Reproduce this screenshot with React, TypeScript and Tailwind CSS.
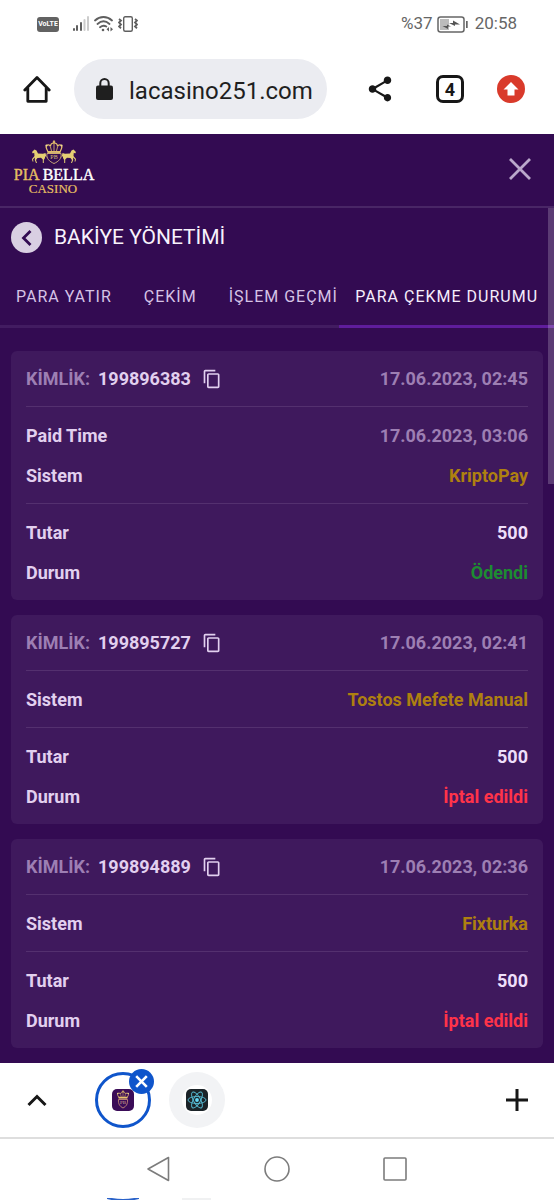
import { MdContentCopy, MdShare } from "react-icons/md";

type Transaction = {
  id: string;
  date: string;
  paidTime?: string;
  system: string;
  amount: string;
  status: "paid" | "cancelled";
};

const transactions: Transaction[] = [
  {
    id: "199896383",
    date: "17.06.2023, 02:45",
    paidTime: "17.06.2023, 03:06",
    system: "KriptoPay",
    amount: "500",
    status: "paid",
  },
  {
    id: "199895727",
    date: "17.06.2023, 02:41",
    system: "Tostos Mefete Manual",
    amount: "500",
    status: "cancelled",
  },
  {
    id: "199894889",
    date: "17.06.2023, 02:36",
    system: "Fixturka",
    amount: "500",
    status: "cancelled",
  },
];

const statuses = {
  paid: { label: "Ödendi", color: "text-[#1d8c31]" },
  cancelled: { label: "İptal edildi", color: "text-[#ff3349]" },
};

function StatusBar() {
  return (
    <div className="flex h-[46px] items-center justify-between pt-[2px] pl-[37px] pr-[37px] text-[17px] text-[#666]">
      <div className="flex items-center">
        <span className="flex h-[15px] w-[22px] items-center justify-center rounded-[3px] bg-[#626262] text-[7px] font-bold text-white">
          VoLTE
        </span>
        <svg className="ml-[13px]" width="18" height="16" viewBox="0 0 18 16" fill="#5f5f5f">
          <rect x="1" y="12" width="2" height="3" rx="1" />
          <rect x="4" y="9" width="2" height="6" rx="1" />
          <rect x="8" y="6" width="2" height="9" rx="1" />
          <rect x="11.500" y="3" width="2" height="12" rx="1" fill="#ccc" />
          <rect x="15" y="0" width="2" height="15" rx="1" fill="#ccc" />
        </svg>
        <svg className="ml-[4px]" width="20" height="16" viewBox="0 0 20 16" fill="none" stroke="#5f5f5f" strokeWidth="1.8" strokeLinecap="round">
          <path d="M1 4.500C6-.2 13-.2 18 4.500M3.500 8C7.200 4.600 11.800 4.600 15.500 8M6 11.300C8.300 9.400 10.500 9.400 12.300 10.500" />
          <circle cx="9" cy="14" r="1.300" fill="#5f5f5f" stroke="none" />
          <path d="M15 11l-2.500 2.300 2.500 2.300zM16.500 11l2.500 2.300-2.500 2.300z" fill="#5f5f5f" stroke="none" />
        </svg>
        <svg className="ml-[4px]" width="20" height="16" viewBox="0 0 20 16" fill="none" stroke="#5f5f5f" strokeWidth="1.400">
          <rect x="5.700" y=".7" width="8.600" height="14.600" rx="1.500" />
          <path d="M1 3l2 1.500-2 2 2 2-2 2 2 1.700M17 3l2 1.500-2 2 2 2-2 2 2 1.700" strokeWidth="1.800" />
        </svg>
      </div>
      <div className="flex items-center">
        <span>%37</span>
        <svg className="mr-[5px] ml-[4px]" width="33" height="17" viewBox="0 0 33 17">
          <rect x="1" y="1" width="26" height="15" rx="2.500" fill="none" stroke="#666" strokeWidth="1.500" />
          <rect x="3" y="3" width="9" height="11" fill="#bbb" />
          <rect x="29" y="5" width="1.700" height="7" fill="#666" />
          <path d="M12 7h4V4.500L23 8.500h-5V10zM14 10.500h-3V13L5.500 10H10V8.500z" fill="#555" />
        </svg>
        <span>20:58</span>
      </div>
    </div>
  );
}

function AddressBar() {
  return (
    <div className="flex h-[88px] items-center pr-[29px] pb-[2px] pl-[23px]">
      <button type="button" aria-label="Home">
        <svg width="28" height="28" viewBox="0 0 28 28" fill="none" stroke="#171717" strokeWidth="2.800" strokeLinejoin="round" strokeLinecap="round">
          <path d="M1.800 15L14 2.500 26.200 15M4.800 13v13.300h18.400V13" />
        </svg>
      </button>
      <div className="ml-[23px] flex h-[60px] min-w-0 flex-1 items-center gap-[16px] rounded-full bg-[#ebecf1] pl-[22px]">
        <svg className="shrink-0" width="17" height="22" viewBox="0 0 17 22">
          <rect y="7.500" width="17" height="14.500" rx="2" fill="#1f1f1f" />
          <path d="M4.300 8.500V5.300a4.200 4.200 0 0 1 8.400 0v3.200" fill="none" stroke="#1f1f1f" strokeWidth="2" />
        </svg>
        <input
          aria-label="Address"
          readOnly
          value="lacasino251.com"
          className="w-full min-w-0 bg-transparent pt-[3px] text-[24px] text-[#1f1f1f] outline-none"
        />
      </div>
      <button type="button" aria-label="Share" className="ml-[38px]">
        <MdShare size={30} color="#171717" />
      </button>
      <button
        type="button"
        aria-label="Open tabs"
        className="ml-[41px] flex h-[28px] w-[28px] items-center justify-center rounded-[7px] border-[3px] border-[#171717] text-[18px] font-bold text-[#171717]"
      >
        4
      </button>
      <button
        type="button"
        aria-label="Update"
        className="ml-[33px] flex h-[28px] w-[28px] items-center justify-center rounded-full bg-[#d93a2b]"
      >
        <svg width="16" height="16" viewBox="0 0 16 16" fill="#fff">
          <path d="M8 1l7.500 7.500H11.500V14.500h-7V8.500H.5z" />
        </svg>
      </button>
    </div>
  );
}

function Crown() {
  return (
    <g>
      <path d="M-7.500-4.500C-9-8-5-9.500-3.500-6.500C-3.500-9.500-1.500-10 0-10C1.500-10 3.500-9.500 3.500-6.500C5-9.500 9-8 7.500-4.500L6-1H-6z" fill="none" stroke="#e9c46c" strokeWidth="1.200" />
      <path d="M-6-1.500H6V.5H-6zM0-12.500l1 1.500-1 1.500-1-1.500zM0-9v7M-3.500-6l1 4M3.500-6l-1 4" fill="#e9c46c" stroke="#e9c46c" strokeWidth=".8" />
      <circle cx="-7.500" cy="-7.500" r="1.100" fill="#f2dc98" />
      <circle cx="7.500" cy="-7.500" r="1.100" fill="#f2dc98" />
    </g>
  );
}

function Horse() {
  return (
    <path
      d="M0 3L2.500 0.500L4.500 1.500L6 4.500L11 4.800L13.500 4L14.500 8.500L13 7L13 9L11.800 11V14H10.800V10.500L9 8.800L5.500 9L4 11L5 14H4L2.800 11L3 8.500L1 10.500L1.500 12.500H.5L0 10L2.500 7L2.200 3.800L.8 4.500z"
      fill="#e5cf73"
    />
  );
}

function Logo() {
  return (
    <svg width="86" height="60" viewBox="0 0 86 60" role="img" aria-label="Pia Bella Casino">
      <g transform="translate(43 14)">
        <Crown />
      </g>
      <path d="M36 14.500Q43 12.500 50 14.500C51 19.500 47.500 22.500 43 24.500C38.500 22.500 35 19.500 36 14.500z" fill="none" stroke="#c9a77a" strokeWidth="1" />
      <g transform="translate(21 10)">
        <Horse />
      </g>
      <g transform="translate(65 10) scale(-1 1)">
        <Horse />
      </g>
      <g fontFamily="Liberation Serif, serif" textAnchor="middle">
        <text x="43" y="20" fontSize="6" fill="#d8b878">PB</text>
        <text x="43" y="41" fontSize="16" fill="#e6bf62" stroke="#e6bf62" strokeWidth=".4">
          PIA <tspan fill="#fff" stroke="#fff">BELLA</tspan>
        </text>
        <text x="42" y="54" fontSize="13" fill="#e6bf62" stroke="#e6bf62" strokeWidth=".2">CASINO</text>
      </g>
    </svg>
  );
}

function SiteHeader() {
  return (
    <header className="flex h-[74px] items-center justify-between border-b-2 border-[#492666] pr-[23px] pb-[2px] pl-[11px]">
      <Logo />
      <button type="button" aria-label="Close">
        <svg width="22" height="22" viewBox="0 0 22 22" stroke="#baa8cb" strokeWidth="2.800">
          <path d="M1 1l20 20M21 1L1 21" />
        </svg>
      </button>
    </header>
  );
}

function Tabs() {
  return (
    <nav className="mt-[15px] flex whitespace-nowrap text-[16px] tracking-[1px] text-[#d6c3e6]">
      <button type="button" className="h-[60px] shrink-0 border-b-3 border-[#421c61] px-4">
        PARA YATIR
      </button>
      <button type="button" className="h-[60px] shrink-0 border-b-3 border-[#421c61] px-4">
        ÇEKİM
      </button>
      <button type="button" className="h-[60px] min-w-0 flex-1 overflow-hidden border-b-3 border-[#421c61] pl-4 text-left">
        İŞLEM GEÇMİ
      </button>
      <button type="button" className="h-[60px] shrink-0 border-b-3 border-[#5f1d9c] px-4 text-[#f6eefc]">
        PARA ÇEKME DURUMU
      </button>
    </nav>
  );
}

function Row({ label, value, color }: { label: string; value: string; color: string }) {
  return (
    <div className="flex h-[40px] items-center justify-between">
      <dt>{label}</dt>
      <dd className={color}>{value}</dd>
    </div>
  );
}

function TransactionCard({ item }: { item: Transaction }) {
  const status = statuses[item.status];

  return (
    <article className="rounded-[6px] bg-[#3f195d] px-[15px] text-[18px] font-bold text-[#e2d0ef]">
      <div className="flex h-[55px] items-center">
        <span className="text-[#9d7fb3]">KİMLİK:</span>
        <span className="ml-[8px]">{item.id}</span>
        <button type="button" aria-label="Kopyala" className="ml-[11px]">
          <MdContentCopy size={20} />
        </button>
        <time className="ml-auto text-[#9d7fb3]">{item.date}</time>
      </div>
      <dl className="border-t border-[#54306f] py-[8px]">
        {item.paidTime && <Row label="Paid Time" value={item.paidTime} color="text-[#9d7fb3]" />}
        <Row label="Sistem" value={item.system} color="text-[#ae8010]" />
      </dl>
      <dl className="border-t border-[#54306f] py-[8px]">
        <Row label="Tutar" value={item.amount} color="text-[#eedffa]" />
        <Row label="Durum" value={status.label} color={status.color} />
      </dl>
    </article>
  );
}

function TabStrip() {
  return (
    <div className="flex h-[76px] items-center border-b-2 border-[#dedede] bg-white pr-[26px] pl-[27px]">
      <button type="button" aria-label="Expand tabs">
        <svg width="20" height="14" viewBox="0 0 20 14" fill="none" stroke="#171717" strokeWidth="3">
          <path d="M1.500 12L10 3.500l8.500 8.500" />
        </svg>
      </button>
      <div className="relative ml-[48px]">
        <button
          type="button"
          aria-label="Pia Bella Casino"
          className="flex h-[56px] w-[56px] items-center justify-center rounded-full border-[3px] border-[#0f55cb]"
        >
          <svg width="22" height="22" viewBox="0 0 22 22">
            <rect width="22" height="22" rx="5" fill="#3b0c58" />
            <g transform="translate(11 9) scale(.7 .6)">
              <Crown />
            </g>
            <path d="M6.500 10.500H15.500C16 15 14 17.500 11 19C8 17.500 6 15 6.500 10.500z" fill="none" stroke="#c48a79" strokeWidth=".9" />
            <text x="11" y="15" fontSize="5" fill="#d9a98c" textAnchor="middle" fontFamily="Liberation Serif, serif">PB</text>
          </svg>
        </button>
        <button
          type="button"
          aria-label="Close tab"
          className="absolute -top-[3px] -right-[3px] flex h-[25px] w-[25px] items-center justify-center rounded-full bg-[#0f55cb]"
        >
          <svg width="13" height="13" viewBox="0 0 13 13" stroke="#fff" strokeWidth="2.600">
            <path d="M1.200 1.200l10.600 10.600M11.800 1.200L1.200 11.800" />
          </svg>
        </button>
      </div>
      <button
        type="button"
        aria-label="React App"
        className="ml-[18px] flex h-[56px] w-[56px] items-center justify-center rounded-full bg-[#f2f3f5]"
      >
        <span className="flex h-[30px] w-[30px] items-center justify-center rounded-full bg-white">
          <svg width="22" height="22" viewBox="0 0 22 22">
            <rect width="22" height="22" rx="5" fill="#1c2429" />
            <g fill="none" stroke="#58bfd8" strokeWidth=".9">
              <ellipse cx="11" cy="11" rx="9" ry="3.500" />
              <ellipse cx="11" cy="11" rx="9" ry="3.500" transform="rotate(60 11 11)" />
              <ellipse cx="11" cy="11" rx="9" ry="3.500" transform="rotate(120 11 11)" />
            </g>
            <circle cx="11" cy="11" r="1.900" fill="#61dafb" />
          </svg>
        </span>
      </button>
      <button type="button" aria-label="New tab" className="ml-auto">
        <svg width="22" height="22" viewBox="0 0 22 22" stroke="#171717" strokeWidth="3">
          <path d="M11 0v22M0 11h22" />
        </svg>
      </button>
    </div>
  );
}

function SystemNav() {
  return (
    <div className="flex h-[59px] items-center justify-center gap-[92px] bg-white">
      <button type="button" aria-label="Back">
        <svg width="26" height="26" viewBox="0 0 26 26" fill="none" stroke="#7c7c7c" strokeWidth="1.600" strokeLinejoin="round">
          <path d="M22.500 1.500v23L2 13z" />
        </svg>
      </button>
      <button type="button" aria-label="Home screen">
        <svg width="26" height="26" viewBox="0 0 26 26" fill="none" stroke="#7c7c7c" strokeWidth="1.600">
          <circle cx="13" cy="13" r="12" />
        </svg>
      </button>
      <button type="button" aria-label="Recent apps">
        <svg width="26" height="26" viewBox="0 0 26 26" fill="none" stroke="#7c7c7c" strokeWidth="1.600">
          <rect x="2" y="2" width="22" height="22" rx="1" />
        </svg>
      </button>
    </div>
  );
}

export default function App() {
  return (
    <div className="flex min-h-screen flex-col bg-white font-['Roboto','Noto_Sans',sans-serif]">
      <StatusBar />
      <AddressBar />
      <div className="flex flex-1 flex-col bg-[#330b52]">
        <SiteHeader />
        <main className="relative flex-1 pt-[14px] pb-[14px]">
          <div className="flex items-center gap-[12px] pl-[11px]">
            <button
              type="button"
              aria-label="Geri"
              className="flex h-[31px] w-[31px] items-center justify-center rounded-full bg-[#d9cfe2]"
            >
              <svg width="11" height="16" viewBox="0 0 11 16" fill="none" stroke="#330b52" strokeWidth="2.800">
                <path d="M9.500 1L2.500 8l7 7" />
              </svg>
            </button>
            <h1 className="text-[21px] leading-[31px] text-[#f8f2fc]">BAKİYE YÖNETİMİ</h1>
          </div>
          <Tabs />
          <div className="flex flex-col gap-[15px] px-[11px] pt-[23px]">
            {transactions.map((item) => (
              <TransactionCard key={item.id} item={item} />
            ))}
          </div>
          {/* Scroll thumb */}
          <div className="absolute top-0 right-0 h-[276px] w-[6px] bg-white/20" />
        </main>
      </div>
      <TabStrip />
      <SystemNav />
      {/* Top edge of the next row of tab bubbles */}
      <div className="flex h-[2px] gap-[43px] pl-[107px]">
        <svg width="32" height="2" viewBox="0 0 32 2" fill="none" stroke="#2a62c9" strokeWidth="2">
          <path d="M0 0Q16 4 32 0" />
        </svg>
        <div className="w-[29px] bg-[#f0f1f2]" />
      </div>
    </div>
  );
}
